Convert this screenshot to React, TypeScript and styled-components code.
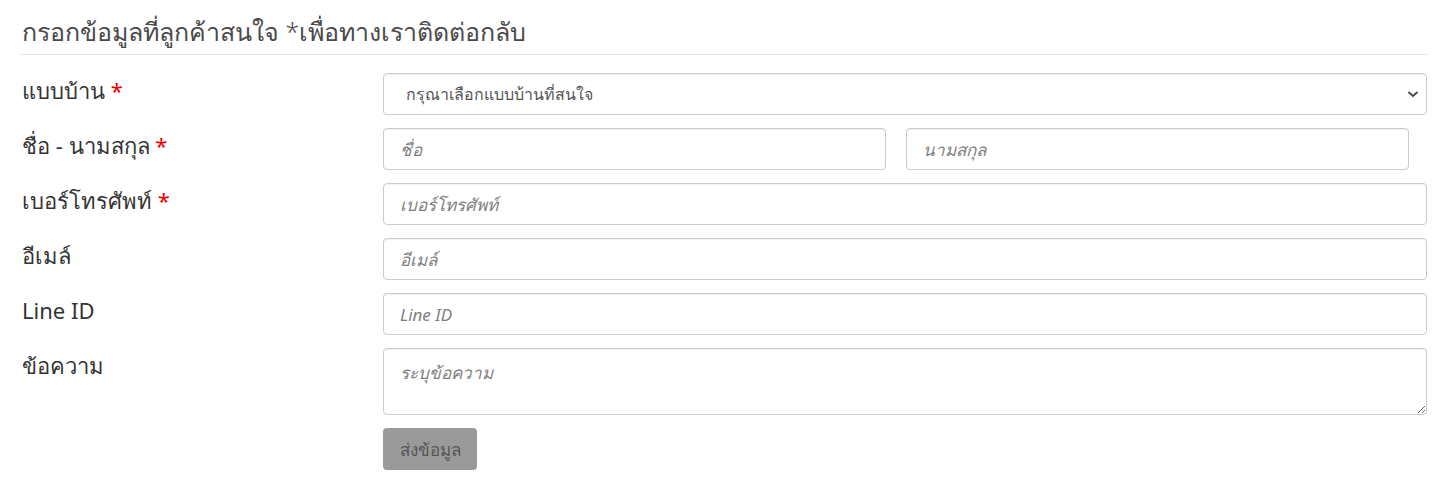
import { createGlobalStyle } from "styled-components"
import styled from "styled-components"

const GlobalStyle = createGlobalStyle`
  html, body {
    margin: 0;
    padding: 0;
    background: #fff;
  }
  body {
    font-family: "Noto Sans", "DejaVu Sans", sans-serif;
    color: #333;
  }
`

const Wrapper = styled.div`
  padding: 14px 22px 0 20px;
  width: 1408px;
`

const Title = styled.h2`
  margin: 0 0 18px;
  padding: 0 0 6px 2px;
  font-size: 25px;
  font-weight: 300;
  line-height: 34px;
  color: #4a4a4a;
  border-bottom: 1px solid #e5e5e5;
`

const Form = styled.form`
  display: grid;
  grid-template-columns: 363px 1fr;
  row-gap: 13px;
  width: 1407px;
`

const Label = styled.label`
  padding: 2px 0 0 2px;
  font-size: 22px;
  line-height: 30px;
  color: #333;
`

const Required = styled.span`
  color: #e00;
`

const Field = styled.div<{ $split?: boolean }>`
  display: grid;
  grid-template-columns: ${(p) => (p.$split ? "503px 503px" : "1fr")};
  column-gap: 20px;
`

const inputBase = `
  box-sizing: border-box;
  width: 100%;
  height: 42px;
  padding: 0 16px;
  border: 1px solid #ccc;
  border-radius: 4px;
  background: #fff;
  font-family: "Noto Sans", "DejaVu Sans", sans-serif;
  font-size: 17px;
  color: #555;
  box-shadow: inset 0 1px 1px rgba(0, 0, 0, 0.06);
  outline: none;

  &::placeholder {
    color: #808080;
    font-style: italic;
  }
`

const Input = styled.input`
  ${inputBase}
`

const SelectBox = styled.div`
  position: relative;
`

const Select = styled.select`
  ${inputBase}
  appearance: none;
  padding-left: 22px;
  font-size: 16px;
`

const Chevron = styled.svg`
  position: absolute;
  right: 8px;
  top: 16px;
  width: 12px;
  height: 10px;
  pointer-events: none;
`

const TextArea = styled.textarea`
  ${inputBase}
  height: 67px;
  padding: 10px 16px;
  resize: vertical;
  display: block;
`

const Button = styled.button`
  width: 94px;
  height: 42px;
  border: none;
  border-radius: 4px;
  background: #9a9a9a;
  color: #555;
  font-family: "Noto Sans", "DejaVu Sans", sans-serif;
  font-size: 17px;
  cursor: pointer;
`

export default function App() {
  return (
    <>
      <GlobalStyle />
      <Wrapper>
        <Title>กรอกข้อมูลที่ลูกค้าสนใจ *เพื่อทางเราติดต่อกลับ</Title>
        <Form onSubmit={(e) => e.preventDefault()}>
          <Label>
            แบบบ้าน <Required>*</Required>
          </Label>
          <Field>
            <SelectBox>
              <Select defaultValue="">
                <option value="">กรุณาเลือกแบบบ้านที่สนใจ</option>
              </Select>
              <Chevron viewBox="0 0 12 10">
                <path d="M1.5 3 L6 7 L10.5 3" fill="none" stroke="#444" strokeWidth="1.8" />
              </Chevron>
            </SelectBox>
          </Field>

          <Label>
            ชื่อ - นามสกุล <Required>*</Required>
          </Label>
          <Field $split>
            <Input placeholder="ชื่อ" />
            <Input placeholder="นามสกุล" />
          </Field>

          <Label>
            เบอร์โทรศัพท์ <Required>*</Required>
          </Label>
          <Field>
            <Input placeholder="เบอร์โทรศัพท์" />
          </Field>

          <Label>อีเมล์</Label>
          <Field>
            <Input placeholder="อีเมล์" />
          </Field>

          <Label>Line ID</Label>
          <Field>
            <Input placeholder="Line ID" />
          </Field>

          <Label>ข้อความ</Label>
          <Field>
            <TextArea placeholder="ระบุข้อความ" />
          </Field>

          <span />
          <Field>
            <div>
              <Button type="submit">ส่งข้อมูล</Button>
            </div>
          </Field>
        </Form>
      </Wrapper>
    </>
  )
}
